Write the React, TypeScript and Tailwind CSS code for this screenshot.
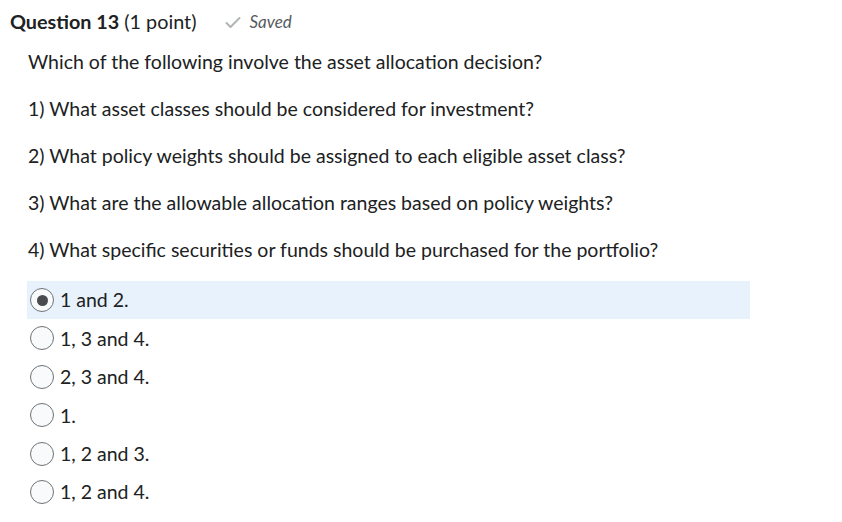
import React from "react";

const options = ["1 and 2.", "1, 3 and 4.", "2, 3 and 4.", "1.", "1, 2 and 3.", "1, 2 and 4."];
const lines = [
  "Which of the following involve the asset allocation decision?",
  "1) What asset classes should be considered for investment?",
  "2) What policy weights should be assigned to each eligible asset class?",
  "3) What are the allowable allocation ranges based on policy weights?",
  "4) What specific securities or funds should be purchased for the portfolio?",
];

export default function App() {
  return (
    <div className="w-[842px] h-[522px] bg-white text-[#202122] overflow-hidden" style={{ fontFamily: "Lato, 'Open Sans', sans-serif" }}>
      <div className="flex items-center h-[22px] mt-[11px] pl-[10px]">
        <span className="text-[19.8px] font-bold text-[#202122]">Question 13</span>
        <span className="text-[19.8px] ml-[5px] text-[#202122]">(1 point)</span>
        <span className="ml-[29px] flex items-center gap-[8px] text-[#6e7376]">
          <svg width="16" height="13" viewBox="0 0 16 13">
            <path d="M1.5 7 L5.5 11 L14.5 2" fill="none" stroke="#b0b4b7" strokeWidth="2" strokeLinecap="round" strokeLinejoin="round" />
          </svg>
          <span className="italic text-[17px] text-[#565a5c]">Saved</span>
        </span>
      </div>
      <div className="pl-[28px] mt-[17px] flex flex-col">
        {lines.map((l, i) => (
          <div key={i} className="h-[47px] leading-[24px] text-[19.5px] whitespace-nowrap">{l}</div>
        ))}
      </div>
      <div className="pl-[27px] mt-[-4px] flex flex-col">
        {options.map((o, i) => (
          <div key={i} className={`w-[723px] h-[38px] mb-[0.4px] flex items-center ${i === 0 ? "bg-[#e8f2fd]" : ""}`}>
            <span className="ml-[3px] w-[24px] h-[24px] rounded-full border border-[#6e7376] bg-[#f9fafc] flex items-center justify-center shrink-0">
              {i === 0 && <span className="w-[11px] h-[11px] rounded-full bg-[#494c4e]" />}
            </span>
            <span className="ml-[6px] text-[19.5px] text-[#202122]">{o}</span>
          </div>
        ))}
      </div>
    </div>
  );
}
